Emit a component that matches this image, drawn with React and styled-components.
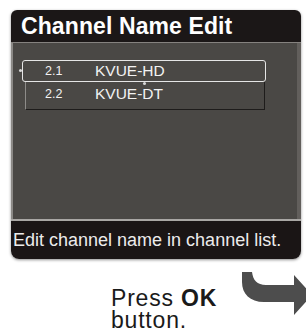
import React from 'react';
import styled, { createGlobalStyle } from 'styled-components';

const Global = createGlobalStyle`
  html, body { margin: 0; padding: 0; background: #fff; }
  body { font-family: "Liberation Sans", Arial, sans-serif; }
`;

const Page = styled.div`
  width: 306px;
  height: 332px;
  overflow: hidden;
  padding: 10px 0 0 11px;
  box-sizing: border-box;
`;

const Panel = styled.div`
  width: 290px;
  border-radius: 6px 6px 8px 8px;
  overflow: hidden;
  box-shadow: 0 1px 3px rgba(0, 0, 0, 0.45);
`;

const Header = styled.div`
  height: 32px;
  background: #1b1717;
  color: #fff;
  font-weight: bold;
  font-size: 23px;
  letter-spacing: 0.1px;
  display: flex;
  align-items: center;
  padding-left: 10px;
  border-bottom: 1px solid #85827f;
`;

const Body = styled.div`
  height: 176px;
  background: #4a4845;
  border-left: 2px solid #8b8986;
  border-right: 4px solid #625f5c;
  padding: 17px 0 0 9px;
  box-sizing: border-box;
`;

const List = styled.div`
  display: flex;
  flex-direction: column;
  width: 244px;
  position: relative;
`;

const Row = styled.div`
  display: flex;
  align-items: center;
  color: #f2f2f2;
  box-sizing: border-box;
  height: ${p => (p.$selected ? 22 : 28)}px;
  margin-left: ${p => (p.$selected ? 0 : 3)}px;
  width: ${p => (p.$selected ? 244 : 240)}px;
  padding-bottom: ${p => (p.$selected ? 0 : 3)}px;
  border: ${p => (p.$selected ? '1.5px solid #e6e6e6' : 'none')};
  border-radius: ${p => (p.$selected ? 3 : 0)}px;
  ${p => !p.$selected && `
    border-left: 1px solid #8e8c89;
    border-bottom: 1px solid #1e1c1b;
    border-right: 1px solid #1e1c1b;
  `}
`;

const Num = styled.span`
  width: ${p => (p.$shift ? 69 : 72)}px;
  padding-left: ${p => (p.$shift ? 19 : 22)}px;
  box-sizing: border-box;
  font-size: 12.5px;
`;

const Name = styled.span`
  font-size: 15.5px;
`;

const Dot = styled.span`
  position: absolute;
  left: ${p => p.$x}px;
  top: ${p => p.$y}px;
  width: 3px;
  height: 3px;
  border-radius: 50%;
  background: #d8d8d8;
`;

const Separator = styled.div`
  height: 2px;
  background: #a9a7a4;
`;

const Footer = styled.div`
  height: 38px;
  background: #1a1515;
  color: #ececec;
  font-size: 18px;
  display: flex;
  align-items: center;
  padding-left: 2px;
`;

const Bottom = styled.div`
  display: flex;
  align-items: flex-start;
  padding: 28px 0 0 100px;
`;

const Hint = styled.div`
  font-size: 23px;
  line-height: 22px;
  letter-spacing: 0.8px;
  color: #1a1a1a;
  width: 129px;
  flex-shrink: 0;
  b { font-weight: bold; }
`;

const Arrow = () => (
  <svg width="72" height="48" viewBox="0 0 72 48" style={{ marginTop: -17, flexShrink: 0 }}>
    <path
      d="M2 2 L12 2 C13 10 17 15 26 15 L54 15 L54 5 L72 25 L54 45 L54 32 L24 32 C10 32 2 24 2 12 Z"
      fill="#4d4d4d"
    />
  </svg>
);

export default function App() {
  return (
    <Page>
      <Global />
      <Panel>
        <Header>Channel Name Edit</Header>
        <Body>
          <List>
            <Dot $x={-3} $y={9} />
            <Dot $x={121} $y={22} />
            <Row $selected>
              <Num>2.1</Num>
              <Name>KVUE-HD</Name>
            </Row>
            <Row>
              <Num $shift>2.2</Num>
              <Name>KVUE-DT</Name>
            </Row>
          </List>
        </Body>
        <Separator />
        <Footer>Edit channel name in channel list.</Footer>
      </Panel>
      <Bottom>
        <Hint>
          Press <b>OK</b>
          <br />
          button.
        </Hint>
        <Arrow />
      </Bottom>
    </Page>
  );
}
